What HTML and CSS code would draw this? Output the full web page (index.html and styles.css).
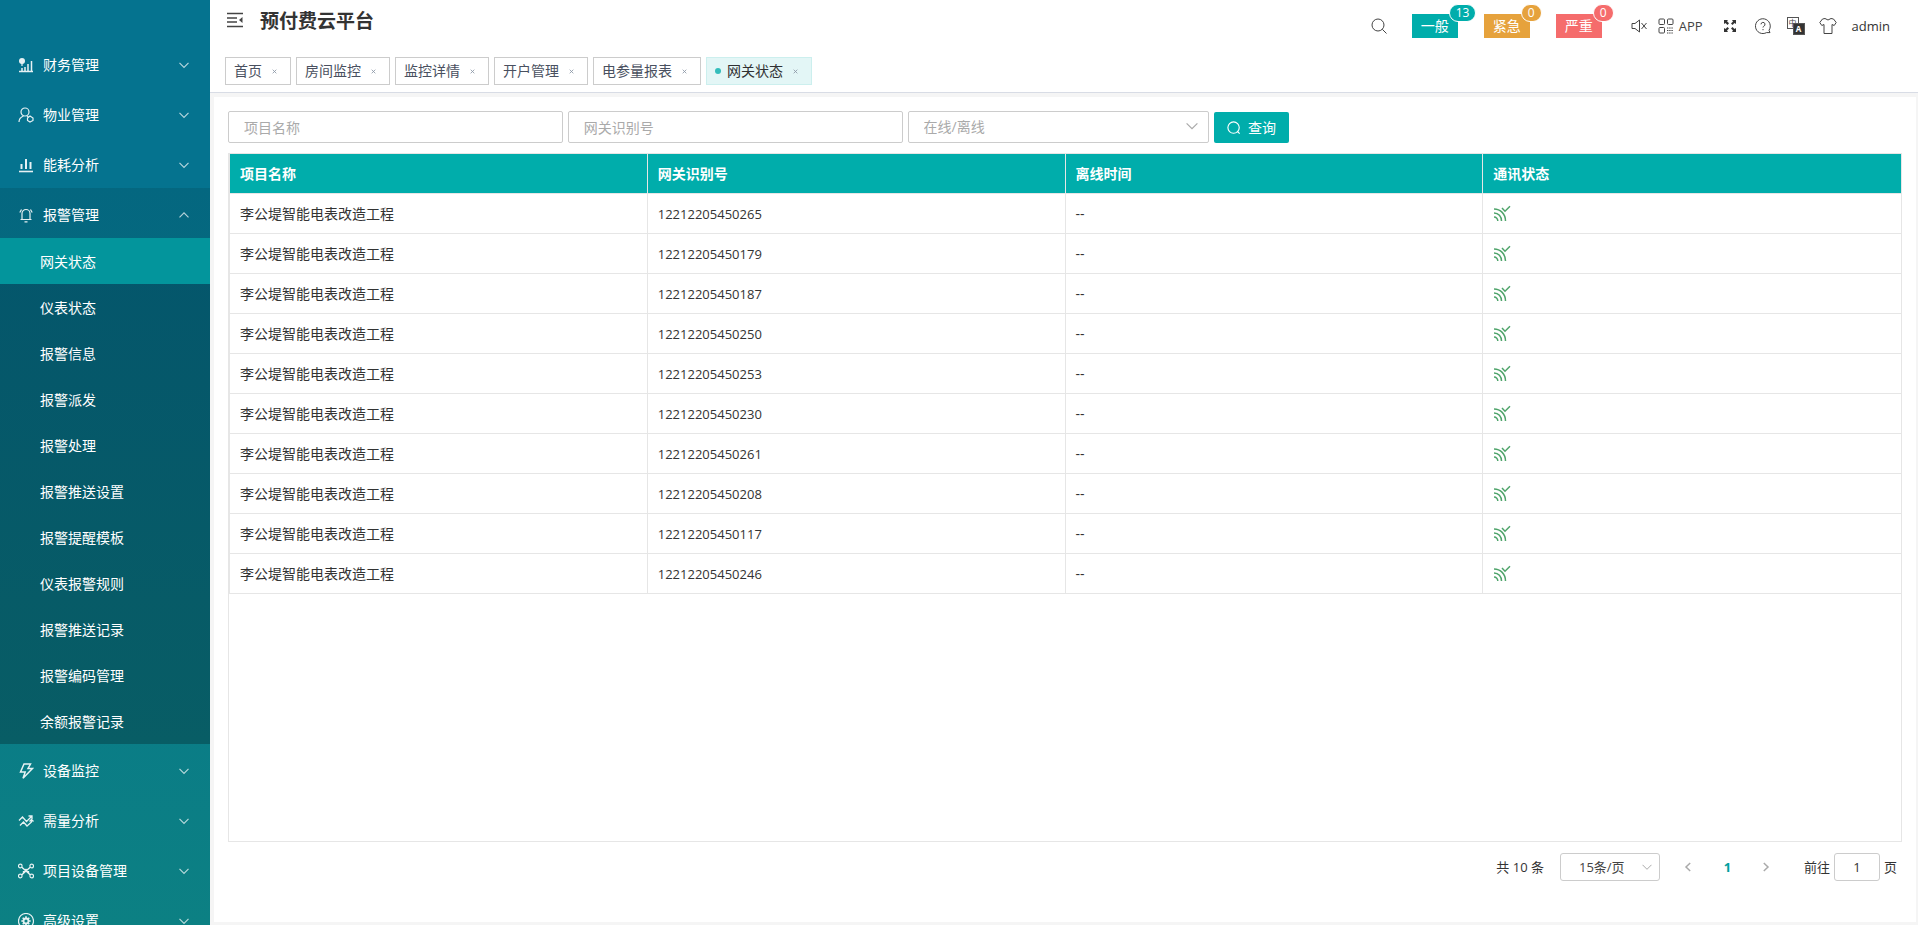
FILE: index.html
```html
<!DOCTYPE html>
<html lang="zh-CN">
<head>
<meta charset="utf-8">
<title>预付费云平台</title>
<link rel="stylesheet" href="styles.css">
</head>
<body>
<svg class="sprite" aria-hidden="true">
  <symbol id="down" viewBox="0 0 10 10"><path d="M.5 2.8 5 7.3 9.5 2.8"/></symbol>
  <symbol id="up" viewBox="0 0 10 10"><path d="M.5 7.3 5 2.8 9.5 7.3"/></symbol>
  <symbol id="left" viewBox="0 0 10 10"><path d="M7.2 1 3 5l4.2 4"/></symbol>
  <symbol id="right" viewBox="0 0 10 10"><path d="M2.8 1 7 5 2.8 9"/></symbol>
  <symbol id="search" viewBox="0 0 16 16"><circle cx="7" cy="7" r="6"/><path d="m11.3 11.3 4.2 4.2"/></symbol>
  <symbol id="x" viewBox="0 0 6 6"><path d="m.8.8 4.400 4.400M5.200.8.8 5.200"/></symbol>
  <symbol id="signal" viewBox="0 0 18 18"><path d="M1 4c6.500 0 11.500 5 11.500 12M1 8c4.500 0 7.500 3.500 7.500 8M1 12c2.300 0 3.800 1.700 3.800 4"/><path d="m9 3 3 3.200L17 1.200"/></symbol>
</svg>
<div class="app">
  <nav class="sidebar" aria-label="主菜单">
    <button class="menu"><svg viewBox="0 0 16 16"><path d="M1 14.500h14M4 14v-3M7 14v-4M10 14V7M13.500 14V4" stroke-width="1.500"/><circle cx="4" cy="4" r="3" fill="currentColor" stroke="none"/><path d="M4 6v3"/></svg><span>财务管理</span><svg class="arrow"><use href="#down"/></svg></button>
    <button class="menu"><svg viewBox="0 0 16 16"><circle cx="7" cy="5" r="4"/><path d="M1 15c0-3 2-5 4.500-6M9 9l1.500 1"/><path d="m12 9 3 2v2.500L12 15l-2.500-1.500V11z"/></svg><span>物业管理</span><svg class="arrow"><use href="#down"/></svg></button>
    <button class="menu"><svg viewBox="0 0 16 16"><path d="M1 14.500h14" stroke-width="1.600"/><path d="M3.500 12V7M8 12V2M12.500 12V5" stroke-width="2"/></svg><span>能耗分析</span><svg class="arrow"><use href="#down"/></svg></button>
    <button class="menu open" aria-expanded="true"><svg viewBox="0 0 16 16"><path d="M2.500 12.500h11M4 12.500V6.500a4 4 0 0 1 8 0v6M6.500 14.800h3M1.800 5.500l1.700-3M14.200 5.500l-1.700-3"/></svg><span>报警管理</span><svg class="arrow"><use href="#up"/></svg></button>
    <div class="submenu">
      <a class="current" href="#">网关状态</a>
      <a href="#">仪表状态</a>
      <a href="#">报警信息</a>
      <a href="#">报警派发</a>
      <a href="#">报警处理</a>
      <a href="#">报警推送设置</a>
      <a href="#">报警提醒模板</a>
      <a href="#">仪表报警规则</a>
      <a href="#">报警推送记录</a>
      <a href="#">报警编码管理</a>
      <a href="#">余额报警记录</a>
    </div>
    <button class="menu"><svg viewBox="0 0 16 16"><path d="M6 1h6.500L10 5.500h4.500L5 15.200 7.200 9H2.500z" stroke-width="1.500"/></svg><span>设备监控</span><svg class="arrow"><use href="#down"/></svg></button>
    <button class="menu"><svg viewBox="0 0 16 16"><path d="m1 7.500 3.500-3.500 4 4.500 5-5M10.500 3h3.500v3M2 12.500 5.500 9l3.500 4 4.500-4V6.500M11.500 8.500l2-2 2 2" stroke-width="1.300"/></svg><span>需量分析</span><svg class="arrow"><use href="#down"/></svg></button>
    <button class="menu"><svg viewBox="0 0 16 16"><circle cx="2.300" cy="3" r="1.800"/><circle cx="13.700" cy="3" r="1.800"/><circle cx="2.300" cy="13" r="1.800"/><circle cx="13.700" cy="13" r="1.800"/><path d="m3.800 4.200 8.400 7.600M12.200 4.200l-8.400 7.600M5.500 10.500v-2L8 6.500l2.500 2v2" stroke-width="1.400"/></svg><span>项目设备管理</span><svg class="arrow"><use href="#down"/></svg></button>
    <button class="menu"><svg viewBox="0 0 16 16"><circle cx="8" cy="8" r="7.500"/><circle cx="8" cy="8" r="2.500" stroke-width="1.800"/><path d="M8 3.300v1.700M8 11v1.700M3.300 8H5M11 8h1.700M4.700 4.700l1.200 1.200M10.100 10.100l1.200 1.200M4.700 11.300l1.200-1.200M10.100 5.900l1.200-1.200" stroke-width="1.600"/></svg><span>高级设置</span><svg class="arrow"><use href="#down"/></svg></button>
  </nav>
  <div class="page">
    <header class="header">
      <div class="topbar">
        <button class="icon-btn fold" aria-label="收起菜单"><svg viewBox="0 0 16 16"><path d="M0 1.500h16M0 6h10M0 10h10M0 14.500h16" stroke-width="1.400"/><path d="M15.500 5v6L12 8z" fill="currentColor" stroke="none"/></svg></button>
        <h1>预付费云平台</h1>
        <div class="tools">
          <button class="icon-btn find" aria-label="搜索"><svg viewBox="0 0 16 16"><use href="#search"/></svg></button>
          <button class="alarm normal">一般<span class="badge">13</span></button>
          <button class="alarm urgent">紧急<span class="badge">0</span></button>
          <button class="alarm severe">严重<span class="badge">0</span></button>
          <button class="icon-btn mute" aria-label="静音"><svg viewBox="0 0 16 16"><path d="M1 5.500h3L8.500 2v12L4 10.500H1zM10.500 5l5 6M15.500 5l-5 6"/></svg></button>
          <button class="icon-btn qr"><svg viewBox="0 0 16 16"><rect x="1" y="1" width="5.500" height="5.500" rx="1"/><rect x="9.500" y="1" width="5.500" height="5.500" rx="1"/><rect x="1" y="9.500" width="5.500" height="5.500" rx="1"/><path d="M9 10h6M9 12.500h6M9 15h6" stroke-dasharray="1.400 .8"/></svg><span>APP</span></button>
          <button class="icon-btn full" aria-label="全屏"><svg viewBox="0 0 12 12"><path d="M0 0h4L3 1.300l2 2L3.500 5l-2-2L0 4zM12 0v4L10.500 3l-2 2L7 3.500l2-2L8 0zM0 12V8l1.500 1 2-2L5 8.500l-2 2L4 12zM12 12H8l1-1.500-2-2L8.500 7l2 2L12 8z" fill="currentColor" stroke="none"/></svg></button>
          <button class="icon-btn help" aria-label="帮助"><svg viewBox="0 0 16 16"><path d="M14 12.300a7.400 7.400 0 1 0-2.500 2.300h3.500z"/><path d="M6 6.300a2 2 0 1 1 2.800 1.900q-.8.400-.8 1.300M8 11v1.200"/></svg></button>
          <button class="icon-btn lang" aria-label="语言"><span class="zh">中</span><span class="en">A</span></button>
          <button class="icon-btn theme" aria-label="主题"><svg viewBox="0 0 18 18"><path d="M6 1.500 3.500 2 .8 5.500l2 3L5 7.500V16.500h8V7.500l2.200 1 2-3L14.500 2 12 1.500Q9 4.500 6 1.500z"/></svg></button>
          <button class="icon-btn user">admin</button>
        </div>
      </div>
      <div class="tabs">
        <a href="#">首页<svg><use href="#x"/></svg></a>
        <a href="#">房间监控<svg><use href="#x"/></svg></a>
        <a href="#">监控详情<svg><use href="#x"/></svg></a>
        <a href="#">开户管理<svg><use href="#x"/></svg></a>
        <a href="#">电参量报表<svg><use href="#x"/></svg></a>
        <a class="active" href="#">网关状态<svg><use href="#x"/></svg></a>
      </div>
    </header>
    <main class="content">
      <form class="filters">
        <input type="text" placeholder="项目名称" aria-label="项目名称">
        <input type="text" placeholder="网关识别号" aria-label="网关识别号">
        <div class="select">
          <select aria-label="在线/离线"><option>在线/离线</option></select>
          <svg><use href="#down"/></svg>
        </div>
        <button class="query" type="button"><svg viewBox="0 0 16 16"><circle cx="7.500" cy="7.500" r="6.500"/><path d="m12 12 2.500 2.500"/></svg>查询</button>
      </form>
      <div class="table-box">
        <table>
          <thead><tr><th>项目名称</th><th>网关识别号</th><th>离线时间</th><th>通讯状态</th></tr></thead>
          <tbody>
            <tr><td>李公堤智能电表改造工程</td><td class="num">12212205450265</td><td>--</td><td><svg class="signal"><use href="#signal"/></svg></td></tr>
            <tr><td>李公堤智能电表改造工程</td><td class="num">12212205450179</td><td>--</td><td><svg class="signal"><use href="#signal"/></svg></td></tr>
            <tr><td>李公堤智能电表改造工程</td><td class="num">12212205450187</td><td>--</td><td><svg class="signal"><use href="#signal"/></svg></td></tr>
            <tr><td>李公堤智能电表改造工程</td><td class="num">12212205450250</td><td>--</td><td><svg class="signal"><use href="#signal"/></svg></td></tr>
            <tr><td>李公堤智能电表改造工程</td><td class="num">12212205450253</td><td>--</td><td><svg class="signal"><use href="#signal"/></svg></td></tr>
            <tr><td>李公堤智能电表改造工程</td><td class="num">12212205450230</td><td>--</td><td><svg class="signal"><use href="#signal"/></svg></td></tr>
            <tr><td>李公堤智能电表改造工程</td><td class="num">12212205450261</td><td>--</td><td><svg class="signal"><use href="#signal"/></svg></td></tr>
            <tr><td>李公堤智能电表改造工程</td><td class="num">12212205450208</td><td>--</td><td><svg class="signal"><use href="#signal"/></svg></td></tr>
            <tr><td>李公堤智能电表改造工程</td><td class="num">12212205450117</td><td>--</td><td><svg class="signal"><use href="#signal"/></svg></td></tr>
            <tr><td>李公堤智能电表改造工程</td><td class="num">12212205450246</td><td>--</td><td><svg class="signal"><use href="#signal"/></svg></td></tr>
          </tbody>
        </table>
      </div>
      <div class="pager">
        <span>共 10 条</span>
        <div class="select size">
          <select aria-label="每页条数"><option>15条/页</option></select>
          <svg><use href="#down"/></svg>
        </div>
        <div class="pages">
          <button aria-label="上一页"><svg><use href="#left"/></svg></button>
          <button class="on">1</button>
          <button aria-label="下一页"><svg><use href="#right"/></svg></button>
        </div>
        <label class="jump">前往<input type="text" value="1">页</label>
      </div>
    </main>
  </div>
</div>
</body>
</html>
```
FILE: styles.css
```css
* { box-sizing: border-box; }
body {
  margin: 0;
  color: #333;
  background: #f5f5f5;
  font: 14px/20px "Open Sans", "Noto Sans CJK SC", sans-serif;
}
button, input, select { font: inherit; color: inherit; }
button { padding: 0; border: 0; background: none; cursor: pointer; }
a { color: inherit; text-decoration: none; }
svg { fill: none; stroke: currentColor; flex: none; }
.sprite { position: absolute; width: 0; height: 0; }

.app { display: flex; height: 100vh; overflow: hidden; }

.sidebar {
  flex: none;
  width: 210px;
  padding-top: 38px;
  overflow: hidden;
  color: #fff;
  background: linear-gradient(#05738f, #05738f 20%, #0c8083);
}
.menu {
  display: flex;
  align-items: center;
  gap: 9px;
  width: 100%;
  height: 50px;
  padding: 3px 21px 0 18px;
  text-align: left;
}
.menu svg { width: 16px; height: 16px; stroke-width: 1.2; opacity: .9; }
.menu span { flex: 1; }
.menu .arrow { width: 10px; height: 10px; opacity: .7; }
.menu.open { background: rgba(0, 0, 0, .1); }
.submenu { background: linear-gradient(#04566c, #085d65); }
.submenu a {
  display: block;
  height: 46px;
  padding-left: 40px;
  line-height: 48px;
}
.submenu .current { background: #03959c; }

.page { flex: 1; display: flex; flex-direction: column; min-width: 0; }
.header { background: #fff; border-bottom: 1px solid #d8dce5; }
.topbar { display: flex; height: 50px; padding: 0 28px 0 17px; }
.icon-btn { display: flex; align-items: center; color: #444; }
.icon-btn svg { width: 16px; height: 16px; }
.fold { height: 40px; color: #444; }
h1 { margin: 0 auto 0 17px; font-size: 19px; line-height: 43px; }
.tools { display: flex; align-items: center; height: 52px; }
.find { margin-right: 25px; }
.alarm {
  position: relative;
  width: 46px;
  height: 24px;
  margin: 0 26px 0 0;
  color: #fff;
}
.normal, .normal .badge { background: #00adab; }
.urgent, .urgent .badge { background: #e6a23c; }
.severe, .severe .badge { background: #f56c6c; }
.badge {
  position: absolute;
  top: -10px;
  left: 37px;
  min-width: 20px;
  height: 18px;
  padding: 0 6px;
  border: 1px solid #fff;
  border-radius: 9px;
  font-size: 12px;
  line-height: 16px;
}
.mute { margin-left: 3px; }
.qr { gap: 5px; margin-left: 11px; font-size: 13px; }
.full { margin-left: 21px; color: #333; }
.full svg { width: 12px; height: 12px; }
.help { margin-left: 19px; }
.lang { position: relative; width: 18px; height: 18px; margin-left: 16px; font-size: 8px; line-height: 10px; }
.lang span { position: absolute; width: 12px; height: 12px; border: 1px solid #555; text-align: center; }
.lang .zh { top: 0; left: 0; }
.lang .en { right: 0; bottom: 0; color: #fff; background: #333; font-weight: 700; }
.theme { margin-left: 14px; }
.theme svg { width: 18px; height: 18px; }
.user { margin-left: 15px; color: #333; font-size: 13px; }

.tabs { display: flex; gap: 5px; padding: 7px 15px; }
.tabs a {
  display: flex;
  align-items: center;
  height: 28px;
  padding: 0 13px 0 8px;
  border: 1px solid #ccc;
  color: #495060;
}
.tabs svg { width: 5px; height: 5px; margin-left: 10px; color: #8a96a5; }
.tabs .active { color: #303133; background: #e3f6f6; border-color: #ccefee; }
.tabs .active::before {
  content: "";
  width: 6px;
  height: 6px;
  margin-right: 6px;
  border-radius: 50%;
  background: #33bdbb;
}

.content {
  flex: 1;
  display: flex;
  flex-direction: column;
  min-height: 0;
  margin: 4px 2px 3px 4px;
  padding: 14px 14px 41px;
  background: #fff;
}
.filters { display: flex; align-items: flex-end; gap: 5px; margin-bottom: 10px; }
.filters input, .select select, .jump input {
  height: 32px;
  padding: 0 15px;
  border: 1px solid #ccc;
  border-radius: 2px;
  background: #fff;
  outline: 0;
}
.filters input { width: 20%; }
.filters input::placeholder { color: #aaa; opacity: 1; }
.select { position: relative; width: 18%; }
.select select { width: 100%; color: #aaa; appearance: none; }
.select svg { position: absolute; top: 9px; right: 11px; width: 12px; height: 12px; color: #aaa; pointer-events: none; }
.query {
  display: flex;
  align-items: center;
  gap: 7px;
  height: 31px;
  padding: 0 13px;
  border-radius: 2px;
  color: #fff;
  background: #00adab;
}
.query svg { width: 14px; height: 14px; stroke-width: 1.3; }

.table-box { flex: 1; min-height: 0; border: 1px solid #e6e6e6; }
table { width: 100%; table-layout: fixed; border-collapse: separate; border-spacing: 0; border-left: 1px solid #e6e6e6; }
th, td {
  height: 40px;
  padding: 0 10px;
  text-align: left;
  border-right: 1px solid #e6e6e6;
  border-bottom: 1px solid #e6e6e6;
}
th:last-child, td:last-child { border-right: 0; }
th { color: #fff; background: #00adab; }
.num { font-size: 13px; }
.signal { display: block; width: 18px; height: 18px; color: #4fa46b; stroke-width: 1.5; }

.pager { display: flex; align-items: center; justify-content: flex-end; padding-top: 11px; font-size: 13px; }
.size { width: 100px; margin-left: 16px; }
.size select { height: 28px; padding: 0 18px; color: #444; border-radius: 3px; }
.size svg { width: 10px; height: 10px; right: 8px; }
.pages { display: flex; margin: 0 18px 0 9px; }
.pages button { width: 39px; height: 28px; color: #aaa; }
.pages svg { width: 10px; height: 10px; stroke-width: 1.5; }
.pages .on { color: #00a09e; font-weight: 700; }
.jump { display: flex; align-items: center; gap: 4px; padding-right: 5px; }
.jump input { width: 46px; height: 28px; padding: 0; text-align: center; border-radius: 3px; }
```
